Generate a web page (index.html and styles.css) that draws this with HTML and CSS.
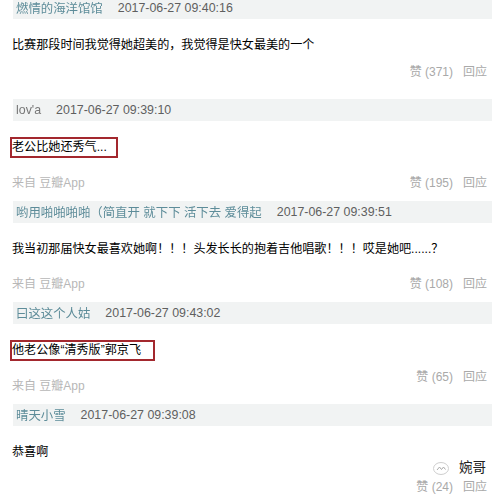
FILE: index.html
```html
<!DOCTYPE html>
<html lang="zh-CN">
<head>
    <meta charset="UTF-8">
    <title>评论</title>
    <link rel="stylesheet" href="styles.css">
</head>
<body>
    <div class="list">
        <div class="item first">
            <div class="meta"><span class="user">燃情的海洋馆馆</span><span class="time">2017-06-27 09:40:16</span></div>
            <p class="text">比赛那段时间我觉得她超美的，我觉得是快女最美的一个</p>
            <div class="foot"><span class="from"></span><span class="acts">赞 (371)<span class="reply">回应</span></span></div>
        </div>
        <div class="item">
            <div class="meta"><span class="user grey">lov'a</span><span class="time">2017-06-27 09:39:10</span></div>
            <p class="text"><span class="mark">老公比她还秀气...</span></p>
            <div class="foot"><span class="from">来自 豆瓣App</span><span class="acts">赞 (195)<span class="reply">回应</span></span></div>
        </div>
        <div class="item">
            <div class="meta"><span class="user">哟用啪啪啪啪（简直开 就下下 活下去 爱得起</span><span class="time">2017-06-27 09:39:51</span></div>
            <p class="text">我当初那届快女最喜欢她啊！！！头发长长的抱着吉他唱歌！！！哎是她吧......？</p>
            <div class="foot"><span class="from">来自 豆瓣App</span><span class="acts">赞 (108)<span class="reply">回应</span></span></div>
        </div>
        <div class="item">
            <div class="meta"><span class="user">曰这这个人姑</span><span class="time">2017-06-27 09:43:02</span></div>
            <p class="text"><span class="mark wide">他老公像“清秀版”郭京飞</span></p>
            <div class="foot"><span class="from">来自 豆瓣App</span><span class="acts up">赞 (65)<span class="reply">回应</span></span></div>
        </div>
        <div class="item last">
            <div class="meta"><span class="user">晴天小雪</span><span class="time">2017-06-27 09:39:08</span></div>
            <p class="text">恭喜啊</p>
            <div class="foot">
                <span class="from"></span><span class="acts">赞 (24)<span class="reply">回应</span></span>
                <div class="watermark">
                    <svg width="18" height="15" viewBox="0 0 18 15">
                        <ellipse cx="9" cy="7.5" rx="7.5" ry="6" fill="none" stroke="#cfcfcf" stroke-width="1"/>
                        <path d="M5 9 L7.5 6 L9.5 8.5 L11.5 6 L13.5 8.5" fill="none" stroke="#aaa" stroke-width="1"/>
                    </svg>
                    <span>婉哥</span>
                </div>
            </div>
        </div>
    </div>
</body>
</html>
```

FILE: styles.css
```css
body {
    margin: 0;
    background: #fff;
    font-family: "Liberation Sans", "Noto Sans CJK SC", sans-serif;
}
.list {
    padding: 0 4px 0 12px;
    margin-top: -3px;
}
.item {
    padding-bottom: 10px;
}
.item.first {
    padding-bottom: 19px;
}
.meta {
    height: 22px;
    margin-left: 1px;
    padding-left: 3px;
    background: #f1f3f3;
    display: flex;
    align-items: center;
    gap: 15px;
    font-size: 12.4px;
}
.meta .user {
    color: #5d8c99;
    filter: blur(0.7px);
}
.meta .user.grey {
    color: #777;
}
.meta .time {
    color: #5f5f5f;
}
.text {
    margin: 16px 0 0;
    font-size: 12.1px;
    line-height: 20px;
    color: #000;
}
.mark {
    display: inline-block;
    border: 2px solid #a3282e;
    margin-left: -2px;
    padding: 0 9px 0 0;
    line-height: 17px;
}
.mark.wide {
    padding-right: 12px;
}
.foot {
    margin: 17px 5px 0 0;
    height: 16px;
    display: flex;
    justify-content: space-between;
    align-items: flex-end;
    font-size: 12px;
    line-height: 16px;
    position: relative;
}
.first .foot {
    margin-top: 9px;
}
.from {
    color: #b7b7b7;
}
.acts {
    color: #a9a9a9;
}
.acts.up {
    margin-bottom: 9px;
}
.reply {
    margin-left: 10px;
}
.watermark {
    position: absolute;
    right: 1px;
    top: -19px;
    display: flex;
    align-items: center;
    gap: 9px;
    font-size: 13.5px;
    color: #222;
}
```
